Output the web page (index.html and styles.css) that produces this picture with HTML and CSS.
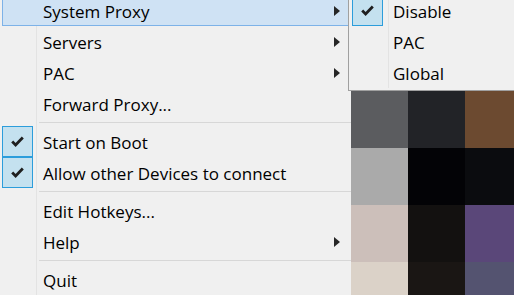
FILE: index.html
```html
<!doctype html>
<html lang="en">
    <head>
        <meta charset="UTF-8" />
        <meta name="viewport" content="width=device-width, initial-scale=1.0" />
        <title>Tray Menu</title>
        <link rel="stylesheet" href="styles.css">
    </head>
    <body>
        <div class="desktop">
            <div class="menu">
                <div class="menu-item hot has-sub"><span class="label">System Proxy</span></div>
                <div class="menu-item has-sub"><span class="label">Servers</span></div>
                <div class="menu-item has-sub"><span class="label">PAC</span></div>
                <div class="menu-item"><span class="label">Forward Proxy...</span></div>
                <div class="menu-sep"></div>
                <div class="menu-item checked">
                    <span class="check"><svg width="13" height="11" viewBox="0 0 13 11"><path d="M1.2 5.6 L4.6 9 L11.8 1.6" /></svg></span>
                    <span class="label">Start on Boot</span>
                </div>
                <div class="menu-item checked">
                    <span class="check"><svg width="13" height="11" viewBox="0 0 13 11"><path d="M1.2 5.6 L4.6 9 L11.8 1.6" /></svg></span>
                    <span class="label">Allow other Devices to connect</span>
                </div>
                <div class="menu-sep"></div>
                <div class="menu-item"><span class="label">Edit Hotkeys...</span></div>
                <div class="menu-item has-sub"><span class="label">Help</span></div>
                <div class="menu-sep"></div>
                <div class="menu-item"><span class="label">Quit</span></div>
            </div>

            <div class="wallpaper">
                <div class="tile" style="background: #5b5c5f"></div>
                <div class="tile" style="background: #222327"></div>
                <div class="tile" style="background: #6c4a30"></div>
                <div class="tile" style="background: #aaaaaa"></div>
                <div class="tile" style="background: #030306"></div>
                <div class="tile" style="background: #0b0c0f"></div>
                <div class="tile" style="background: #ccbfba"></div>
                <div class="tile" style="background: #131110"></div>
                <div class="tile" style="background: #5a4779"></div>
                <div class="tile" style="background: #dbd2c8"></div>
                <div class="tile" style="background: #1a1614"></div>
                <div class="tile" style="background: #545370"></div>
            </div>

            <!-- System Proxy submenu, popped out over the desktop -->
            <div class="submenu">
                <div class="menu-item checked">
                    <span class="check"><svg width="13" height="11" viewBox="0 0 13 11"><path d="M1.2 5.6 L4.6 9 L11.8 1.6" /></svg></span>
                    <span class="label">Disable</span>
                </div>
                <div class="menu-item"><span class="label">PAC</span></div>
                <div class="menu-item"><span class="label">Global</span></div>
            </div>
        </div>
    </body>
</html>
```

FILE: styles.css
```css
* {
    margin: 0;
    padding: 0;
    box-sizing: border-box;
}

body {
    font-family: "Segoe UI", "Open Sans", sans-serif;
    font-size: 17px;
    color: #000;
    background: #f0f0f0;
    overflow: hidden;
}

.desktop {
    display: flex;
    width: 514px;
    height: 295px;
    position: relative;
    overflow: hidden;
}

.menu {
    width: 351px;
    flex-shrink: 0;
    margin-top: -5px;
    padding-left: 2px;
    padding-right: 2px;
    background: #f0f0f0 linear-gradient(#e3e3e3, #e3e3e3) 36px 0 / 1px 100% no-repeat;
}

.menu-item {
    position: relative;
    height: 31px;
    display: flex;
    align-items: center;
    padding-left: 41px;
}

.menu-item .label {
    line-height: 1;
    white-space: nowrap;
    padding-top: 1px;
}

.menu-item.hot {
    background: #cfe2f4;
    border: 1px solid #7db2e8;
    padding-left: 40px;
}

.menu-item.has-sub::after {
    content: "";
    position: absolute;
    left: 332px;
    top: 50%;
    margin-top: -5px;
    border-left: 6px solid #262626;
    border-top: 5px solid transparent;
    border-bottom: 5px solid transparent;
}

.menu-item.hot.has-sub::after {
    left: 331px;
}

.check {
    position: absolute;
    left: 0;
    top: 0;
    width: 31px;
    height: 31px;
    display: flex;
    align-items: center;
    justify-content: center;
    background: #c4e1ef;
    border: 1px solid #2c9ddb;
}

.check svg path {
    fill: none;
    stroke: #1f1f1f;
    stroke-width: 2.8;
}

.menu-sep {
    height: 7px;
    margin-left: 37px;
    margin-right: -2px;
    background: linear-gradient(#d7d7d7, #d7d7d7) 0 3px / 100% 1px no-repeat;
}

.wallpaper {
    flex: 1;
    margin-top: 91px;
    display: grid;
    grid-template-columns: 57px 57px 49px;
    grid-auto-rows: 57px;
}

.submenu {
    position: absolute;
    left: 348px;
    top: -5px;
    width: 170px;
    padding: 0 0 2px 3px;
    border-left: 1px solid #a0a0a0;
    border-bottom: 1px solid #a0a0a0;
    background: #f0f0f0 linear-gradient(#e3e3e3, #e3e3e3) 39px 0 / 1px 93px no-repeat;
}

.submenu .menu-item {
    padding-left: 41px;
}
```
